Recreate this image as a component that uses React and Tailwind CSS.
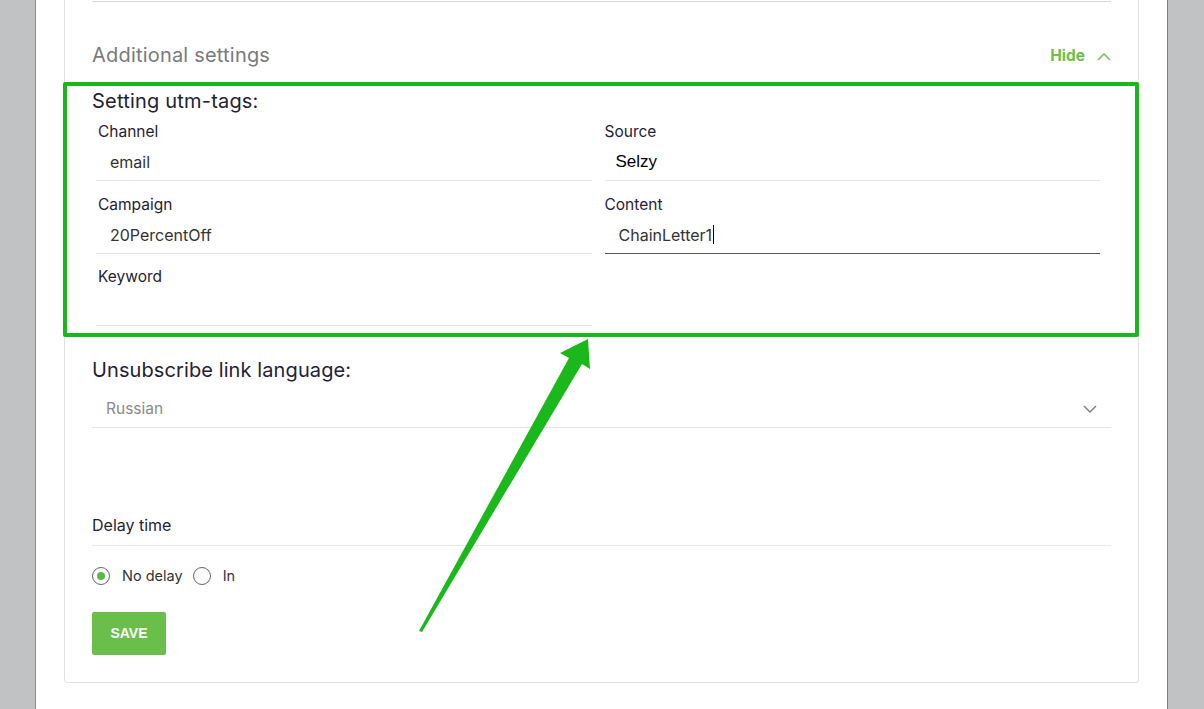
import React from "react";

const font = { fontFamily: "Inter, 'Noto Sans', sans-serif" };

function Field({ label, value, focused, arial, cursor, labelPl = "pl-[2px]", valuePl = "pl-[14px]" }) {
  return (
    <div className="flex flex-col">
      <div className={`h-[20px] text-[15.5px] leading-[22px] text-[#1f2235] ${labelPl}`}>{label}</div>
      <div
        className={`h-[40px] flex items-center pt-[2px] ${valuePl} border-b ${
          focused ? "border-[#555555]" : "border-[#e4e4e4]"
        }`}
      >
        {value ? (
          <span
            className={
              arial
                ? "text-[17px] text-black font-['Liberation_Sans',Arial,sans-serif]"
                : "text-[16px] text-[#333333]"
            }
          >
            {value}
          </span>
        ) : null}
        {cursor ? <span className="inline-block w-px h-[19px] bg-black ml-[1px]" /> : null}
      </div>
    </div>
  );
}

export default function App() {
  return (
    <div className="relative flex h-[709px] w-[1204px] overflow-hidden bg-white" style={font}>
      <div className="w-[36px] shrink-0 bg-[#c1c2c4] border-r border-[#8c8c8c]" />
      <div className="w-[1131px] shrink-0 bg-white px-[28px]">
        <div className="border-x border-b border-[#e2e2e2] rounded-b-[4px] px-[27px] pb-[27px] bg-white">
          <div className="h-[2px] border-b border-[#d8d8d8]" />
          <div className="mt-[38px] h-[28px] flex items-center justify-between">
            <span className="text-[20px] tracking-[0.2px] text-[#7a7a7a] mt-[1px]">Additional settings</span>
            <span className="flex items-center mt-[4px]">
              <span className="text-[15.5px] font-bold text-[#6cc04a]">Hide</span>
              <svg width="14" height="9" viewBox="0 0 14 9" className="ml-[12px]" fill="none">
                <path d="M1 8 L7 2 L13 8" stroke="#7cc45c" strokeWidth="1.6" />
              </svg>
            </span>
          </div>

          <div className="mt-[14px] -ml-[29px] -mr-[28px] border-[4px] border-[#17b817] rounded-[2px] pl-[25px] pr-[24px] pt-[3px] pb-[8px]">
            <div className="h-[24px] text-[20px] tracking-[0.2px] leading-[24px] text-[#1f2235]">Setting utm-tags:</div>
            <div className="mt-[8px] ml-[4px] mr-[11px] grid grid-cols-2 gap-x-[13px] gap-y-[13px]">
              <Field label="Channel" value="email" />
              <Field label="Source" value="Selzy" arial labelPl="pl-0" valuePl="pl-[11px]" />
              <Field label="Campaign" value="20PercentOff" />
              <Field label="Content" value="ChainLetter1" focused cursor labelPl="pl-0" />
              <div className="-mt-[1px] -mb-[1px]">
                <Field label="Keyword" value="" />
              </div>
            </div>
          </div>

          <div className="mt-[21px] h-[24px] text-[20px] tracking-[0.1px] leading-[24px] text-[#1f2235]">
            Unsubscribe link language:
          </div>
          <div className="mt-[6px] h-[40px] flex items-center justify-between pt-[2px] pl-[14px] pr-[14px] border-b border-[#e4e4e4]">
            <span className="text-[15.5px] text-[#8a8a8a]">Russian</span>
            <svg width="14" height="8" viewBox="0 0 14 8" fill="none">
              <path d="M1 1 L7 7 L13 1" stroke="#7a7a7a" strokeWidth="1.4" />
            </svg>
          </div>

          <div className="mt-[87px] pb-[10px] border-b border-[#e8e8e8] text-[16px] leading-[20px] text-[#1f2235]">
            Delay time
          </div>

          <div className="mt-[20px] h-[20px] flex items-center text-[14.5px] text-[#333333]">
            <span className="w-[18px] h-[18px] rounded-full border border-[#666666] flex items-center justify-center">
              <span className="w-[8px] h-[8px] rounded-full bg-[#5cb84a]" />
            </span>
            <span className="ml-[12px]">No delay</span>
            <span className="ml-[10px] w-[18px] h-[18px] rounded-full border border-[#666666]" />
            <span className="ml-[12px]">In</span>
          </div>

          <button className="mt-[26px] w-[74px] h-[43px] rounded-[2px] bg-[#6abf4b] text-white text-[14px] font-bold flex items-center justify-center font-['Liberation_Sans',Arial,sans-serif]">
            SAVE
          </button>
        </div>
      </div>
      <div className="flex-1 bg-[#c1c2c4] border-l border-[#7d7d7d]" />

      <svg className="absolute inset-0 pointer-events-none" width="1204" height="709" viewBox="0 0 1204 709">
        <polygon
          points="419,631 422,632 582,364 590,369 588,339 560,353 569,358"
          fill="#1ab81a"
        />
      </svg>
    </div>
  );
}
